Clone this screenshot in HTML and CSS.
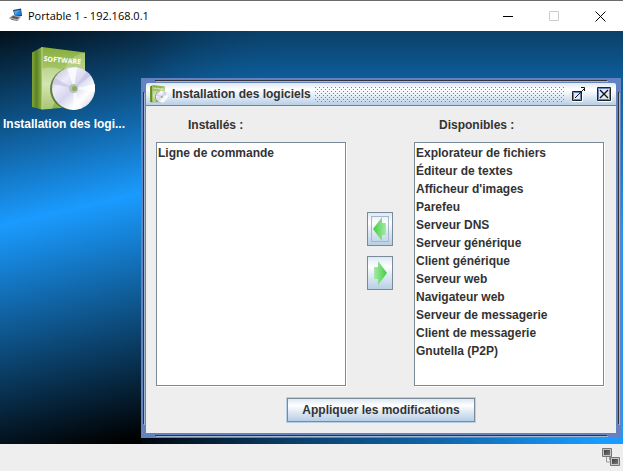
FILE: index.html
```html
<!DOCTYPE html>
<html lang="fr">
<head>
<meta charset="utf-8">
<title>Portable 1 - 192.168.0.1</title>
<link rel="stylesheet" href="styles.css">
</head>
<body>
<svg class="defs" width="0" height="0" aria-hidden="true">
  <defs>
    <linearGradient id="side" x1="0" x2="1" y1="0" y2="0"><stop offset="0" stop-color="#7fa338"/><stop offset=".45" stop-color="#5c8126"/><stop offset="1" stop-color="#8db648"/></linearGradient>
    <linearGradient id="front" x1="0" x2="0" y1="0" y2="1"><stop offset="0" stop-color="#86ad3c"/><stop offset=".35" stop-color="#a5c667"/><stop offset=".6" stop-color="#c3db94"/><stop offset="1" stop-color="#86b03c"/></linearGradient>
    <linearGradient id="disc" x1="0" x2="1" y1="0" y2="1"><stop offset="0" stop-color="#b9b9d2"/><stop offset=".3" stop-color="#ececfa"/><stop offset=".5" stop-color="#d6d5ee"/><stop offset=".72" stop-color="#ffffff"/><stop offset="1" stop-color="#c4c4dd"/></linearGradient>
    <linearGradient id="arrow" x1="0" x2="1" y1="0" y2="0"><stop offset="0" stop-color="#3fd03f"/><stop offset="1" stop-color="#a9e8a9"/></linearGradient>
    <linearGradient id="arrow-r" x1="0" x2="1" y1="0" y2="0"><stop offset="0" stop-color="#a9e8a9"/><stop offset="1" stop-color="#3fd03f"/></linearGradient>
    <linearGradient id="screen" x1="0" x2="1" y1="0" y2="1"><stop offset="0" stop-color="#3f3f3f"/><stop offset="1" stop-color="#777"/></linearGradient>
    <symbol id="software" viewBox="0 0 64 64">
      <path d="M0 5.500 10 0v62.500L0 60z" fill="url(#side)"/>
      <path d="M10 0 53 5.500V59l-43 3.500z" fill="url(#front)"/>
      <path d="M10 22c11-4 20 1 24 3L20 62l-10 .5z" fill="#fff" opacity=".28"/>
      <path d="M53 5.500C38 9 31 19 29 37l24 1z" fill="#fff" opacity=".22"/>
      <path d="M10 0v62.500" stroke="#cfe3a2" stroke-width=".7"/>
      <circle cx="39" cy="42" r="21" fill="#415c26" opacity=".75"/>
      <circle cx="41.500" cy="41.500" r="21.500" fill="url(#disc)"/>
      <path d="M42 41.500 35 21.500l10-1.200zM42 41.500 50 61.300l-9 1.600zM42 41.500 63 37v8z" fill="#fff" opacity=".75"/>
      <path d="M42 41.500 21 37l2-6zM42 41.500l13-17 4 4z" fill="#bdbce2" opacity=".55"/>
      <circle cx="41.500" cy="41.500" r="4.500" fill="#b8c3b2"/>
      <circle cx="42.500" cy="41.500" r="2.600" fill="#8daa66"/>
      <text class="box-text" x="11.500" y="14" transform="rotate(5 11 14)">SOFTWARE</text>
    </symbol>
  </defs>
</svg>

<header class="titlebar">
  <svg class="app-icon" width="16" height="16" viewBox="0 0 16 16" aria-hidden="true">
    <path d="m5 2 8-1.500L14 8l-7 1z" fill="#243c55"/>
    <path d="m6 3 6.500-1L13 7 7.500 8z" fill="#1c83dc"/>
    <path d="m6 3 6.500-1L7 7z" fill="#4ba6ef"/>
    <path d="m5 7 8 2-3 3.500L1 10z" fill="#a5a8ab"/>
    <path d="m5 8 6 1.500-2 1.500L3 9.500z" fill="#4d5154"/>
    <path d="m1 10 9 2.500V13L4 12z" fill="#666"/>
  </svg>
  <h1 class="titlebar-text">Portable 1 - 192.168.0.1</h1>
  <button class="win-button" type="button" aria-label="Réduire"><svg width="11" height="11"><path d="M0 5.500h10" stroke="#000"/></svg></button>
  <button class="win-button" type="button" aria-label="Agrandir" disabled><svg width="11" height="11"><path d="M.5.500h9v9h-9z" fill="none" stroke="#ccc"/></svg></button>
  <button class="win-button" type="button" aria-label="Fermer"><svg width="11" height="11"><path d="m.5.500 10 10m0-10-10 10" stroke="#000"/></svg></button>
</header>

<main class="desktop">
  <a class="shortcut" href="#installer">
    <svg width="64" height="64" aria-hidden="true"><use href="#software"/></svg>
    <span>Installation des logi...</span>
  </a>

  <section class="frame" id="installer">
    <div class="frame-title">
      <svg width="18" height="18" aria-hidden="true"><use href="#software"/></svg>
      <h2>Installation des logiciels</h2>
      <span class="grip"></span>
      <button class="frame-button" type="button" aria-label="Agrandir">
        <svg width="15" height="15">
          <path d="M1.500 4.500h9v9h-9z" fill="#dfe9f4" stroke="#222"/>
          <path d="M2.500 5.500h7v7h-7z" fill="none" stroke="#6382bf"/>
          <path d="M1 14.500h10.500V6" fill="none" stroke="#fff"/>
          <path d="m4 11 9-9" stroke="#111"/><path d="M10 .5h3.500V4" fill="none" stroke="#111"/>
        </svg>
      </button>
      <button class="frame-button" type="button" aria-label="Fermer">
        <svg width="15" height="15">
          <path d="M1 14.500h13.500V1" fill="none" stroke="#fff"/>
          <path d="M.5.500h13v13H.5z" fill="#dfe9f4" stroke="#222"/>
          <path d="M1.500 1.500h11v11h-11z" fill="none" stroke="#6382bf"/>
          <path d="m3 3 8 8m0-8-8 8" stroke="#111" stroke-width="1.300"/>
        </svg>
      </button>
    </div>

    <form class="panel">
      <div class="transfer">
        <label class="list-label" for="installed">Installés :</label>
        <div class="movers">
          <button class="metal mover mover-focus" type="button" aria-label="Installer">
            <svg width="14" height="24"><path d="M0 12 9 0v6h4v12H9v6z" fill="url(#arrow)"/></svg>
          </button>
          <button class="metal mover" type="button" aria-label="Désinstaller">
            <svg width="14" height="24"><path d="M14 12 5 0v6H1v12h4v6z" fill="url(#arrow-r)"/></svg>
          </button>
        </div>
        <label class="list-label list-label-right" for="available">Disponibles :</label>
        <select class="list" id="installed" multiple>
          <option>Ligne de commande</option>
        </select>
        <select class="list" id="available" multiple>
          <option>Explorateur de fichiers</option>
          <option>Éditeur de textes</option>
          <option>Afficheur d'images</option>
          <option>Parefeu</option>
          <option>Serveur DNS</option>
          <option>Serveur générique</option>
          <option>Client générique</option>
          <option>Serveur web</option>
          <option>Navigateur web</option>
          <option>Serveur de messagerie</option>
          <option>Client de messagerie</option>
          <option>Gnutella (P2P)</option>
        </select>
      </div>
      <button class="metal apply" type="button">Appliquer les modifications</button>
    </form>
  </section>
</main>

<footer class="statusbar">
  <svg width="18" height="19" viewBox="0 0 18 19" role="img" aria-label="Réseau">
    <path d="M4.500 9v5h4M7.500 9v3" fill="none" stroke="#999"/>
    <path d="M.5.500h9v8h-9z" fill="#c4c4c4" stroke="#777"/>
    <path d="M2 2h6v5H2z" fill="url(#screen)"/>
    <path d="M8.500 9.500h9v8h-9z" fill="#c4c4c4" stroke="#777"/>
    <path d="M10 11h6v5h-6z" fill="url(#screen)"/>
  </svg>
</footer>
</body>
</html>
```
FILE: styles.css
```css
* {
  box-sizing: border-box;
}

body {
  --line: #6382bf;
  --edge: #7a8a99;
  display: flex;
  flex-direction: column;
  min-height: 100vh;
  margin: 0;
  background: #eee;
  color: #333;
  font: bold 12px/18px "Liberation Sans", Arial, sans-serif;
}

svg {
  display: block;
  flex: none;
}

button {
  padding: 0;
  border: 0;
  background: none;
  color: inherit;
  font: inherit;
}

.defs {
  position: absolute;
}

.box-text {
  fill: #fff;
  font: bold 7px "Open Sans", sans-serif;
}

/* Outer window */
.titlebar {
  display: flex;
  align-items: center;
  height: 31px;
  padding-left: 8px;
  border-top: 1px solid #6b6b6b;
  background: #fff;
}

.titlebar-text {
  flex: 1;
  margin: 0 0 0 4px;
  color: #000;
  font: 11px/18px "Open Sans", "Noto Sans", sans-serif;
}

.win-button {
  display: grid;
  place-items: center;
  width: 46px;
  height: 30px;
}

.desktop {
  position: relative;
  flex: 1;
  min-height: 413px;
  background: linear-gradient(167deg, #000 -4%, #1a9bff 35%, #000 79%);
}

/* Brighter sweep over the right of the wallpaper */
.desktop::before,
.desktop::after {
  content: "";
  position: absolute;
  inset: 0;
  background: linear-gradient(#0b4068, #0d5e9c 12%, #1a9bff 50%);
  mask-image: linear-gradient(90deg, transparent 23%, #000 45%);
}

.desktop::after {
  top: auto;
  left: 141px;
  height: 6px;
  background: linear-gradient(90deg, #01060c, #0a3c66 30%, #1066ab 62%, #1a9bff 95%);
  mask-image: none;
}

.shortcut {
  position: relative;
  z-index: 1;
  display: flex;
  flex-direction: column;
  align-items: center;
  gap: 4px;
  width: 128px;
  padding-top: 16px;
  color: #fff;
  text-decoration: none;
}

/* Inner window: each side carries a dark groove with a light shadow */
.frame {
  --dark: linear-gradient(#333, #333);
  --light: linear-gradient(#a3b8cc, #a3b8cc);
  position: absolute;
  z-index: 1;
  inset: 47px 2px 6px 141px;
  display: flex;
  flex-direction: column;
  padding: 5px;
  background-color: var(--line);
  background-image:
    var(--dark), var(--dark), var(--dark), var(--dark),
    var(--light), var(--light), var(--light), var(--light);
  background-position:
    left 14px top 2px,
    left 14px bottom 2px,
    left 2px top 14px,
    right 2px top 14px,
    left 15px top 3px,
    left 15px bottom 1px,
    left 3px top 15px,
    right 1px top 15px;
  background-size:
    calc(100% - 28px) 1px,
    calc(100% - 28px) 1px,
    1px calc(100% - 28px),
    1px calc(100% - 28px);
  background-repeat: no-repeat;
}

.frame-title {
  display: flex;
  align-items: center;
  height: 23px;
  padding: 0 4px;
  border-bottom: 1px solid var(--line);
  border-radius: 2px 2px 0 0;
  background: linear-gradient(#dde8f3, #fff 30%, #dde8f3 65%, #b8cfe5);
}

.frame-title h2 {
  margin: 0 4px;
  font: inherit;
}

.grip {
  flex: 1;
  height: 15px;
  margin-right: 6px;
  background:
    conic-gradient(from 270deg at 1px 1px, var(--line) 90deg, transparent 0) 0 0 / 4px 4px,
    conic-gradient(from 270deg at 1px 1px, var(--line) 90deg, transparent 0) 2px 2px / 4px 4px;
}

.frame-button + .frame-button {
  margin-left: 11px;
}

.panel {
  flex: 1;
  display: flex;
  flex-direction: column;
  padding: 10px 12px 10px 10px;
  background: #eee;
}

.transfer {
  flex: 1;
  display: grid;
  grid-template: 18px 1fr / 1fr 26px 1fr;
  gap: 8px 21px;
}

.list-label {
  padding-left: 32px;
}

.list-label-right {
  padding-left: 25px;
}

.movers {
  grid-row: span 2;
  display: flex;
  flex-direction: column;
  justify-content: center;
  gap: 10px;
}

.metal {
  border: 1px solid var(--edge);
  background: linear-gradient(#dde8f3, #fff 30%, #dde8f3 60%, #b8cfe5);
}

.mover {
  display: grid;
  place-items: center;
  height: 34px;
}

.mover-focus {
  outline: 1px solid #a3b8cc;
  outline-offset: -5px;
}

.list {
  width: 100%;
  height: 100%;
  min-width: 0;
  padding: 3px 1px;
  border: 1px solid var(--edge);
  border-radius: 0;
  outline: 0;
  box-shadow: 1px 1px #fff;
  background: #fff;
  color: inherit;
  font: inherit;
  overflow: auto;
}

.list option {
  min-height: 18px;
  padding: 0;
  font: bold 12px/18px "Liberation Sans", Arial, sans-serif;
}

.apply {
  align-self: center;
  height: 26px;
  margin: 11px 0 0 2px;
  padding: 0 14px;
  border-width: 2px;
  outline: 1px solid #b8cfe5;
  outline-offset: -1px;
}

.statusbar {
  display: flex;
  justify-content: flex-end;
  align-items: center;
  height: 27px;
  padding-right: 3px;
}
```
